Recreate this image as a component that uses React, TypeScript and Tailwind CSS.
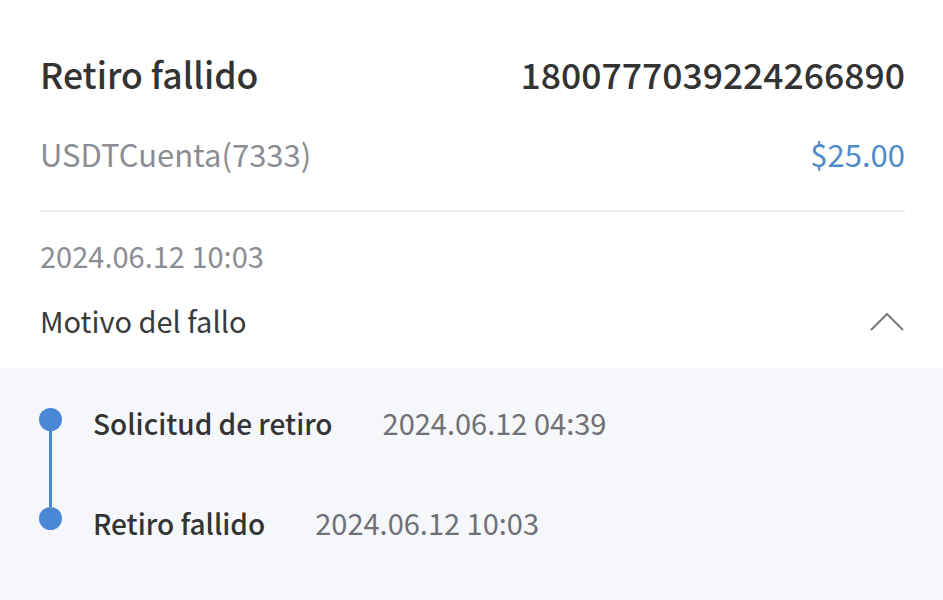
import React from 'react'

const font = { fontFamily: '"Noto Sans CJK SC", "Noto Sans", sans-serif' }

type Step = { label: string; time: string }

const steps: Step[] = [
    { label: 'Solicitud de retiro', time: '2024.06.12 04:39' },
    { label: 'Retiro fallido', time: '2024.06.12 10:03' },
]

export default function App() {
    return (
        <div className="w-[943px] h-[600px] bg-white flex flex-col overflow-hidden" style={font}>
            <div className="pl-[40px] pr-[38px] pt-[50px] pb-[23px]">
                <div className="h-[48px] flex items-center justify-between">
                    <span className="text-[35.5px] font-medium text-[#333333]">Retiro fallido</span>
                    <span className="text-[35.5px] font-medium text-[#333333]">1800777039224266890</span>
                </div>
                <div className="h-[48px] mt-[32px] flex items-center justify-between">
                    <span className="text-[31px] text-[#8a8d93]">USDTCuenta(7333)</span>
                    <span className="text-[31px] text-[#4f8bc9]">$25.00</span>
                </div>
                <div className="h-[2px] mt-[32px] bg-[#ebebee]" />
                <div className="h-[48px] mt-[20px] flex items-center">
                    <span className="text-[29px] text-[#8a8d93]">2024.06.12 10:03</span>
                </div>
                <div className="h-[48px] mt-[17px] flex items-center justify-between">
                    <span className="text-[29px] text-[#3a3a3a]">Motivo del fallo</span>
                    <svg width="34" height="19" viewBox="0 0 34 19" fill="none" className="mr-[1px]">
                        <path d="M1 18 L17 2 L33 18" stroke="#7a7a7a" strokeWidth="2" />
                    </svg>
                </div>
            </div>
            <div className="flex-1 bg-[#f5f7fa] pl-[39px] pt-[40px]">
                <div className="flex">
                    <div className="flex flex-col items-center w-[23px]">
                        <div className="w-[23px] h-[23px] rounded-full bg-[#4a88d6]" />
                        <div className="w-[3px] h-[76px] bg-[#4a88d6]" />
                        <div className="w-[23px] h-[23px] rounded-full bg-[#4a88d6]" />
                    </div>
                    <div className="flex flex-col ml-[31px] mt-[-9px]">
                        {steps.map((s, i) => (
                            <div key={i} className={`h-[48px] flex items-center ${i > 0 ? 'mt-[52px]' : ''}`}>
                                <span className="text-[28px] font-medium text-[#333333]">{s.label}</span>
                                <span className="text-[29px] text-[#6f7177] ml-[50px]">{s.time}</span>
                            </div>
                        ))}
                    </div>
                </div>
            </div>
        </div>
    )
}
